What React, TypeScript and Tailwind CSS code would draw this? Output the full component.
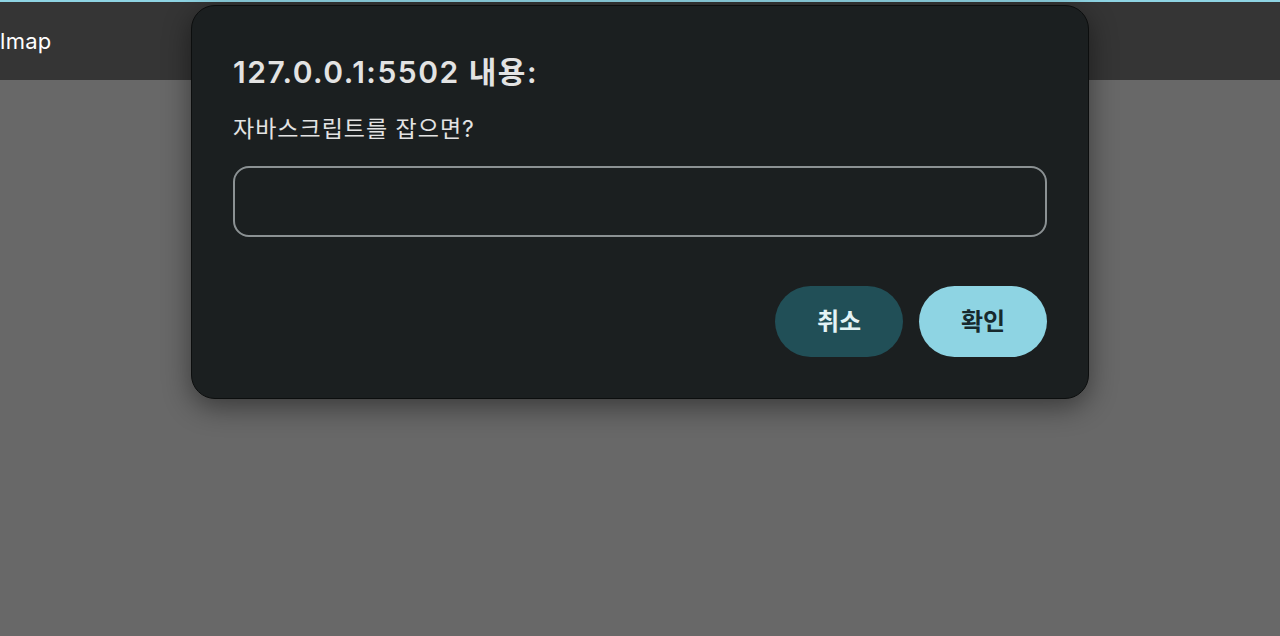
import React from "react";

export default function App() {
  const font = { fontFamily: 'Inter, "Noto Sans CJK KR", sans-serif' };
  return (
    <div className="relative w-[1280px] h-[636px] overflow-hidden bg-[#686868]" style={font}>
      <div className="h-[2px] bg-[#8ed4e3]" />
      <div className="h-[78px] bg-[#353535] flex items-center">
        <span className="text-white text-[22px] ml-[0px] tracking-[0.3px]">lmap</span>
      </div>
      <div className="absolute left-[191px] top-[5px] w-[898px] h-[394px] rounded-[24px] bg-[#1b1f20] border border-[#0c0e0e] shadow-[0_8px_28px_rgba(0,0,0,0.45)] px-[41px] pt-[44px]">
        <div className="text-[30px] leading-[44px] font-semibold text-[#e3e3e3] tracking-[1.5px]">127.0.0.1:5502 내용:</div>
        <div className="mt-[20px] text-[23px] leading-[30px] text-[#e3e3e3] tracking-[1px]">자바스크립트를 잡으면?</div>
        <div className="mt-[22px] h-[71px] rounded-[16px] border-2 border-[#8b9193]" />
        <div className="mt-[49px] flex justify-end gap-[16px]">
          <button className="w-[128px] h-[71px] rounded-full bg-[#214f57] text-[#e3f3f5] text-[24px] font-semibold">취소</button>
          <button className="w-[128px] h-[71px] rounded-full bg-[#8ed4e3] text-[#17292d] text-[24px] font-semibold">확인</button>
        </div>
      </div>
    </div>
  );
}
